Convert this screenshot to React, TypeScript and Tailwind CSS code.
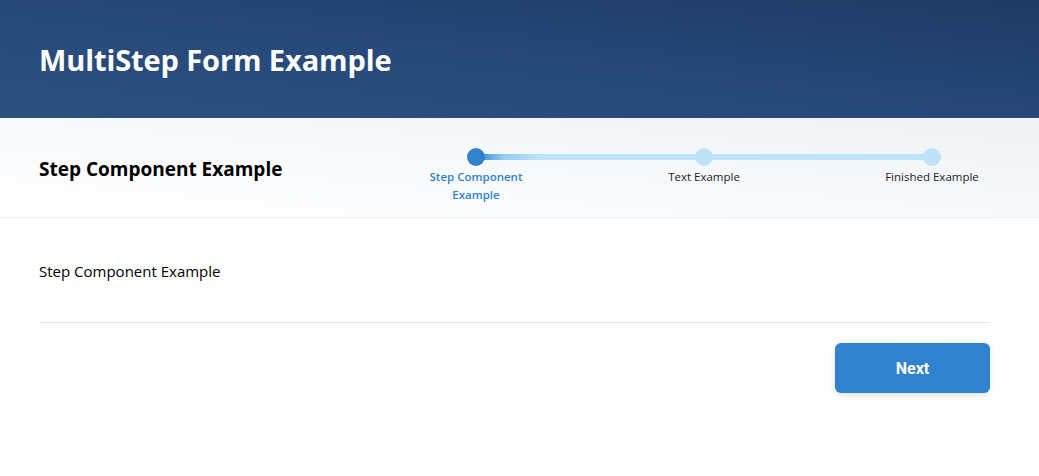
import type { ReactNode } from "react";

type Step = {
  label: string;
  active?: boolean;
};

const steps: Step[] = [
  { label: "Step Component Example", active: true },
  { label: "Text Example" },
  { label: "Finished Example" },
];

const StepDot = ({ step }: { step: Step }) => (
  <div className="relative z-10 flex w-[116px] flex-col items-center">
    <div
      className={
        step.active
          ? "h-[18px] w-[18px] rounded-full bg-[#3182ce]"
          : "h-[18px] w-[18px] rounded-full bg-[#bee3f8]"
      }
    />
    <p
      className={
        step.active
          ? "mt-[2px] text-center text-[11.5px] leading-[18px] font-semibold text-[#3182ce]"
          : "mt-[2px] text-center text-[11.5px] leading-[18px] text-[#1a202c]"
      }
    >
      {step.label}
    </p>
  </div>
);

const Stepper = () => (
  <div className="relative flex w-[572px] justify-between">
    <div className="absolute left-[58px] right-[58px] top-[6px] h-[6px] bg-[linear-gradient(to_right,#3182ce_0%,#90cdf4_6%,#bee3f8_14%,#bee3f8_100%)]" />
    {steps.map((step) => (
      <StepDot key={step.label} step={step} />
    ))}
  </div>
);

const Section = ({ children, className }: { children: ReactNode; className?: string }) => (
  <div className={`pl-[39px] pr-[49px] ${className ?? ""}`}>{children}</div>
);

export default function App() {
  return (
    <div className="min-h-[476px] bg-white font-['Open_Sans','Noto_Sans',sans-serif] text-black">
      <header className="flex h-[118px] items-center bg-[linear-gradient(to_top_right,#2b5181_0%,#27487a_50%,#1f3a64_100%)] pl-[39px]">
        <h1 className="text-[29px] leading-none font-bold tracking-[-0.1px] text-white">
          MultiStep Form Example
        </h1>
      </header>

      <Section className="flex h-[100px] items-center justify-between border-b border-[#eef1f5] bg-[linear-gradient(to_top_right,#ffffff_0%,#f7f9fb_50%,#eff2f6_100%)]">
        <h2 className="pt-[4px] text-[19px] font-bold">Step Component Example</h2>
        <div className="pt-[16px]">
          <Stepper />
        </div>
      </Section>

      <Section>
        <p className="pt-[41px] text-[15px] leading-[24px]">Step Component Example</p>
        <div className="mt-[39px] border-t border-[#e2e8f0]" />
        <div className="flex justify-end pt-[20px]">
          <button className="h-[50px] w-[155px] rounded-[6px] bg-[#3182ce] pt-[1px] font-['Roboto','Liberation_Sans',sans-serif] text-[16px] font-bold text-white shadow-[0_2px_6px_rgba(0,0,0,0.12)]">
            Next
          </button>
        </div>
      </Section>
    </div>
  );
}
